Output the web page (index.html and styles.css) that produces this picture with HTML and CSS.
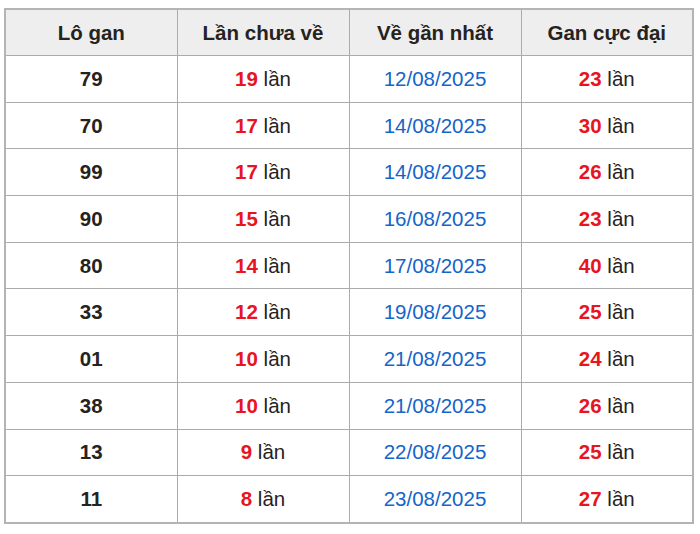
FILE: index.html
```html
<!DOCTYPE html>
<html lang="vi">
<head>
<meta charset="utf-8">
<link rel="stylesheet" href="styles.css">
</head>
<body>
<table class="gan">
<thead>
<tr><th>Lô gan</th><th>Lần chưa về</th><th>Về gần nhất</th><th>Gan cực đại</th></tr>
</thead>
<tbody>
<tr><td class="lo">79</td><td><b class="n">19</b> lần</td><td class="d">12/08/2025</td><td><b class="n">23</b> lần</td></tr>
<tr><td class="lo">70</td><td><b class="n">17</b> lần</td><td class="d">14/08/2025</td><td><b class="n">30</b> lần</td></tr>
<tr><td class="lo">99</td><td><b class="n">17</b> lần</td><td class="d">14/08/2025</td><td><b class="n">26</b> lần</td></tr>
<tr><td class="lo">90</td><td><b class="n">15</b> lần</td><td class="d">16/08/2025</td><td><b class="n">23</b> lần</td></tr>
<tr><td class="lo">80</td><td><b class="n">14</b> lần</td><td class="d">17/08/2025</td><td><b class="n">40</b> lần</td></tr>
<tr><td class="lo">33</td><td><b class="n">12</b> lần</td><td class="d">19/08/2025</td><td><b class="n">25</b> lần</td></tr>
<tr><td class="lo">01</td><td><b class="n">10</b> lần</td><td class="d">21/08/2025</td><td><b class="n">24</b> lần</td></tr>
<tr><td class="lo">38</td><td><b class="n">10</b> lần</td><td class="d">21/08/2025</td><td><b class="n">26</b> lần</td></tr>
<tr><td class="lo">13</td><td><b class="n">9</b> lần</td><td class="d">22/08/2025</td><td><b class="n">25</b> lần</td></tr>
<tr><td class="lo">11</td><td><b class="n">8</b> lần</td><td class="d">23/08/2025</td><td><b class="n">27</b> lần</td></tr>
</tbody>
</table>
</body>
</html>
```
FILE: styles.css
```css
html, body {
  background: #ffffff;
}
body {
  margin: 8px 0 0 4px;
  font-family: "Liberation Sans", Arial, sans-serif;
  color: #26221d;
}
.gan {
  width: 690px;
  border-collapse: collapse;
  table-layout: fixed;
  border: 2px solid #b4b4b4;
}
.gan th, .gan td {
  border: 1px solid #ababab;
  text-align: center;
  vertical-align: middle;
  padding: 0;
  font-size: 20.5px;
}
.gan th {
  background: #eeeeee;
  font-weight: bold;
  height: 45px;
}
.gan td {
  height: 45.7px;
}
.gan .lo {
  font-weight: bold;
}
.gan .n {
  color: #e8141e;
  font-weight: bold;
}
.gan .d {
  color: #1565c8;
}
```
